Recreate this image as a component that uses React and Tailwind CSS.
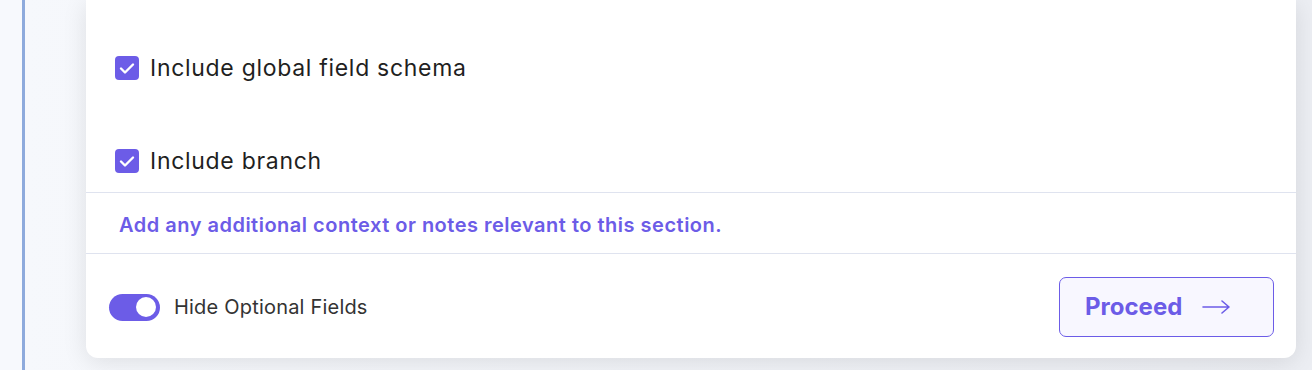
import React, { useState } from 'react';

const CheckRow = ({ label }) => (
    <label className="flex items-center gap-[11px] h-6 cursor-pointer">
        <span className="w-6 h-6 rounded-[4px] bg-[#6c5ce7] flex items-center justify-center shrink-0">
            <svg className="w-6 h-6 text-white" fill="none" stroke="currentColor" viewBox="0 0 24 24">
                <path strokeLinecap="round" strokeLinejoin="round" strokeWidth="2.4" d="M6 12.5l4 4L18 8.5" />
            </svg>
        </span>
        <span className="text-[23px] text-[#1f1f22] tracking-[0.7px] leading-none">{label}</span>
    </label>
);

const App = () => {
    const [hideOptional, setHideOptional] = useState(true);

    return (
        <div className="min-h-screen h-[370px] flex bg-[#f6f8fc] overflow-hidden" style={{ fontFamily: 'Inter, "Noto Sans", sans-serif' }}>
            {/* side rail */}
            <div className="w-[22px] bg-[#f7f9fd]"></div>
            <div className="w-[3px] bg-[#8eaadc]"></div>

            {/* main area */}
            <div className="flex-1 pl-[61px] pr-4 pb-3 bg-gradient-to-r from-[#f6f8fc] to-[#eceef3]">
                <div className="h-[358px] bg-white rounded-b-xl shadow-[0_4px_24px_rgba(0,0,0,0.1)] flex flex-col">
                    {/* options */}
                    <div className="pl-[29px] pt-[56px] pb-[19px] flex flex-col gap-[69px]">
                        <CheckRow label="Include global field schema" />
                        <CheckRow label="Include branch" />
                    </div>

                    {/* notes */}
                    <div className="border-t border-[#dfe3ef] h-[61px] pl-[33px] pt-[4px] flex items-center">
                        <p className="text-[20px] font-semibold text-[#6c5ce7] tracking-[0.5px]">
                            Add any additional context or notes relevant to this section.
                        </p>
                    </div>

                    {/* footer */}
                    <div className="border-t border-[#dfe3ef] flex-1 pl-[23px] pr-[22px] pt-[2px] flex items-center justify-between">
                        <button
                            type="button"
                            onClick={() => setHideOptional(!hideOptional)}
                            className="flex items-center gap-[14px]"
                        >
                            <span className={`w-[51px] h-[27px] rounded-full flex items-center px-[4px] ${hideOptional ? 'bg-[#6c5ce7] justify-end' : 'bg-gray-300 justify-start'}`}>
                                <span className="w-[20px] h-[20px] rounded-full bg-white"></span>
                            </span>
                            <span className="text-[20px] text-[#333] tracking-[0.2px]">Hide Optional Fields</span>
                        </button>

                        <button
                            type="button"
                            className="w-[215px] h-[60px] rounded-[7px] border border-[#6c5ce7] bg-[#f8f7ff] flex items-center pl-[25px] gap-[20px] text-[#6c5ce7]"
                        >
                            <span className="text-[24px] font-bold">Proceed</span>
                            <svg className="w-[28px] h-[16px]" fill="none" stroke="currentColor" viewBox="0 0 28 16">
                                <path strokeLinecap="round" strokeLinejoin="round" strokeWidth="1.6" d="M1 8h26M20 2l7 6-7 6" />
                            </svg>
                        </button>
                    </div>
                </div>
            </div>
        </div>
    );
};

export default App;
